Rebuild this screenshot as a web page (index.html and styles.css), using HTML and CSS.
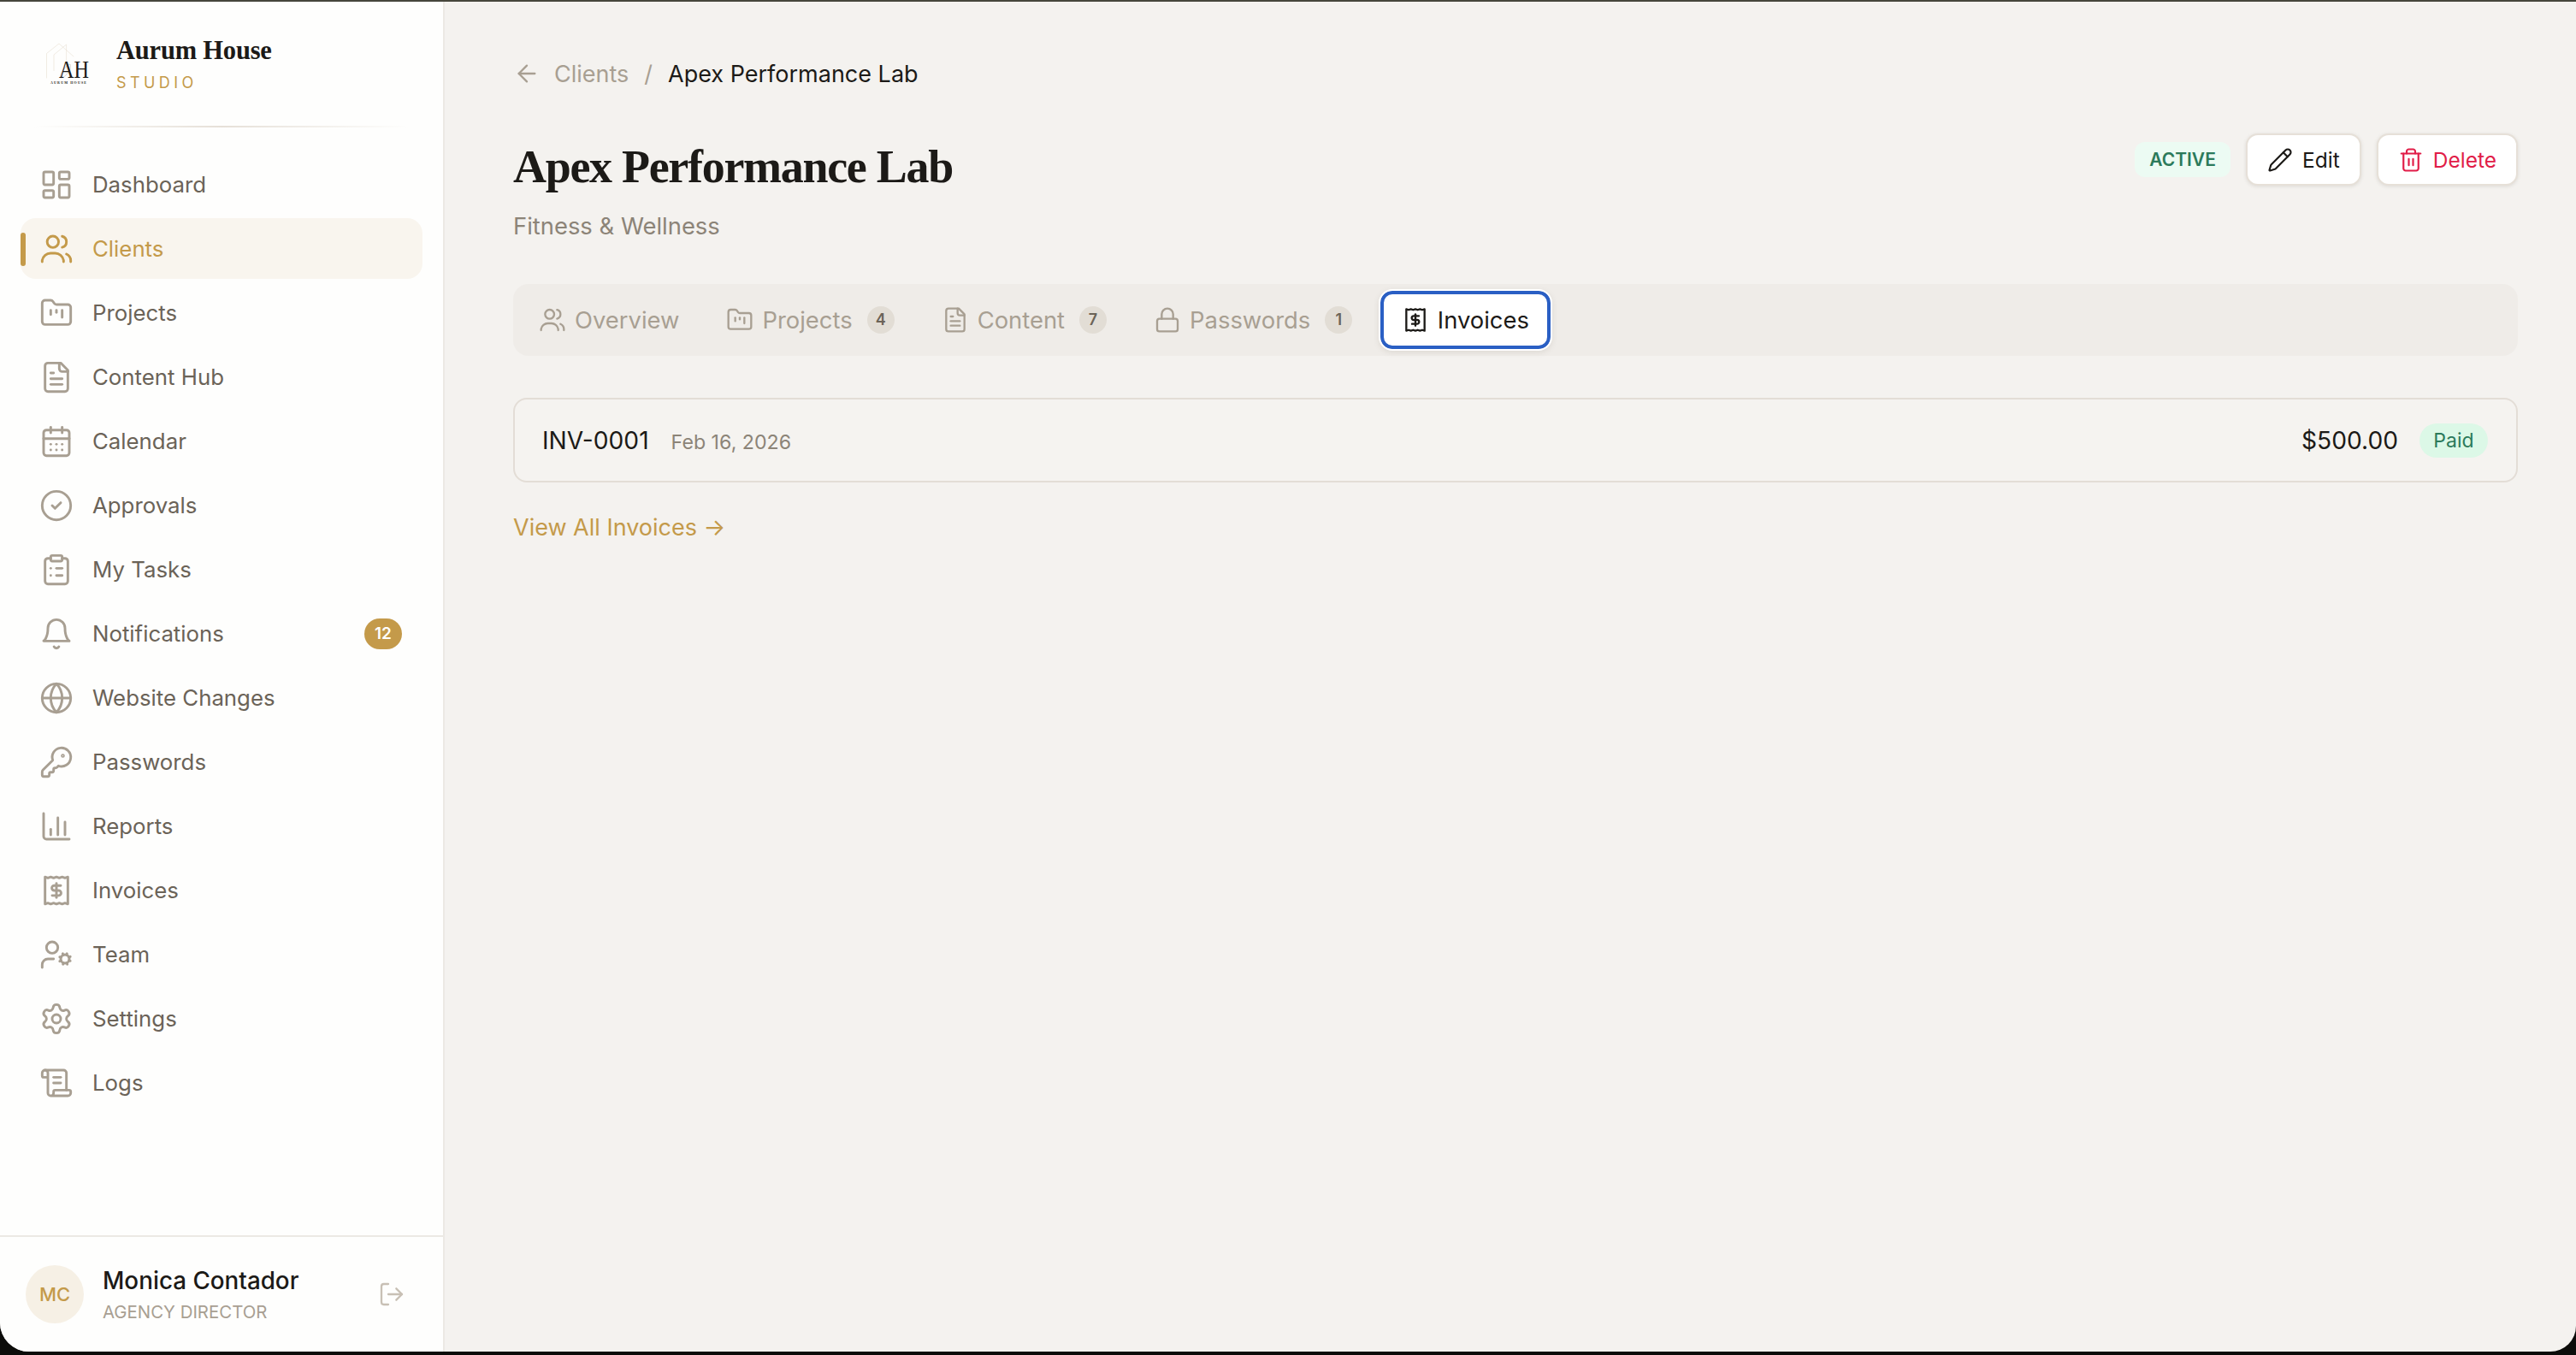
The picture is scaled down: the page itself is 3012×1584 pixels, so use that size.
FILE: index.html
```html
<!DOCTYPE html>
<html lang="en">
<head>
<meta charset="utf-8">
<title>Apex Performance Lab</title>
<link rel="stylesheet" href="styles.css">
</head>
<body>
<svg class="sprite" aria-hidden="true">
  <symbol id="i-dash" viewBox="0 0 24 24"><rect x="3" y="3" width="7" height="9" rx="1"/><rect x="14" y="3" width="7" height="5" rx="1"/><rect x="14" y="12" width="7" height="9" rx="1"/><rect x="3" y="16" width="7" height="5" rx="1"/></symbol>
  <symbol id="i-users" viewBox="0 0 24 24"><circle cx="9.5" cy="7" r="4"/><path d="M2 21v-1a6 6 0 0 1 6-5h3a6 6 0 0 1 6 5v1"/><path d="M16 3.13a4 4 0 0 1 0 7.75"/><path d="M22 21v-1a5 5 0 0 0-3-4.4"/></symbol>
  <symbol id="i-folder" viewBox="0 0 24 24"><path d="M4 20h16a2 2 0 0 0 2-2V8a2 2 0 0 0-2-2h-7.93a2 2 0 0 1-1.66-.9l-.82-1.2A2 2 0 0 0 7.93 3H4a2 2 0 0 0-2 2v13c0 1.1.9 2 2 2Z"/><path d="M8 10v3"/><path d="M12 10v1.5"/><path d="M16 10v5"/></symbol>
  <symbol id="i-file" viewBox="0 0 24 24"><path d="M15 2H6a2 2 0 0 0-2 2v16a2 2 0 0 0 2 2h12a2 2 0 0 0 2-2V7Z"/><path d="M14 2v4a2 2 0 0 0 2 2h4"/><path d="M10 9H8"/><path d="M16 13H8"/><path d="M16 17H8"/></symbol>
  <symbol id="i-cal" viewBox="0 0 24 24"><path d="M8 2v4"/><path d="M16 2v4"/><rect x="3" y="4" width="18" height="18" rx="2"/><path d="M3 10h18"/><path d="M8 14h.01"/><path d="M12 14h.01"/><path d="M16 14h.01"/><path d="M8 18h.01"/><path d="M12 18h.01"/><path d="M16 18h.01"/></symbol>
  <symbol id="i-check" viewBox="0 0 24 24"><circle cx="12" cy="12" r="10"/><path d="m9 12 2 2 4-4"/></symbol>
  <symbol id="i-clip" viewBox="0 0 24 24"><rect x="8" y="2" width="8" height="4" rx="1"/><path d="M16 4h2a2 2 0 0 1 2 2v14a2 2 0 0 1-2 2H6a2 2 0 0 1-2-2V6a2 2 0 0 1 2-2h2"/><path d="M12 11h4"/><path d="M12 16h4"/><path d="M8 11h.01"/><path d="M8 16h.01"/></symbol>
  <symbol id="i-bell" viewBox="0 0 24 24"><path d="M6 8a6 6 0 0 1 12 0c0 7 3 9 3 9H3s3-2 3-9"/><path d="M10.3 21a1.94 1.94 0 0 0 3.4 0"/></symbol>
  <symbol id="i-globe" viewBox="0 0 24 24"><circle cx="12" cy="12" r="10"/><path d="M12 2a14.5 14.5 0 0 0 0 20 14.5 14.5 0 0 0 0-20"/><path d="M2 12h20"/></symbol>
  <symbol id="i-key" viewBox="0 0 24 24"><path d="M2.586 17.414A2 2 0 0 0 2 18.828V21a1 1 0 0 0 1 1h3a1 1 0 0 0 1-1v-1a1 1 0 0 1 1-1h1a1 1 0 0 0 1-1v-1a1 1 0 0 1 1-1h.172a2 2 0 0 0 1.414-.586l.814-.814a6.5 6.5 0 1 0-4-4z"/><circle cx="16.5" cy="7.5" r=".5"/></symbol>
  <symbol id="i-chart" viewBox="0 0 24 24"><path d="M3 3v16a2 2 0 0 0 2 2h16"/><path d="M8 18v-4"/><path d="M13 18V6"/><path d="M18 18V9"/></symbol>
  <symbol id="i-receipt" viewBox="0 0 24 24"><path d="M4 2.5l2 .7 2-.7 2 .7 2-.7 2 .7 2-.7 2 .7 2-.7v19l-2-.7-2 .7-2-.7-2 .7-2-.7-2 .7-2-.7-2 .7z"/><path d="M15 8.5h-4.5a1.75 1.75 0 0 0 0 3.5h3a1.75 1.75 0 0 1 0 3.5H9"/><path d="M12 7v10"/></symbol>
  <symbol id="i-team" viewBox="0 0 24 24"><path d="M10 15H6a4 4 0 0 0-4 4v2"/><circle cx="9" cy="7" r="4"/><circle cx="18" cy="15" r="3"/><path d="m21.7 16.4-.9-.3"/><path d="m15.2 13.9-.9-.3"/><path d="m16.6 18.7.3-.9"/><path d="m19.1 12.2.3-.9"/><path d="m19.6 18.7-.4-1"/><path d="m16.8 12.3-.4-1"/><path d="m14.3 16.6 1-.4"/><path d="m20.7 13.8 1-.4"/></symbol>
  <symbol id="i-gear" viewBox="0 0 24 24"><path d="M9.671 4.136a2.34 2.34 0 0 1 4.659 0 2.34 2.34 0 0 0 3.319 1.915 2.34 2.34 0 0 1 2.33 4.033 2.34 2.34 0 0 0 0 3.831 2.34 2.34 0 0 1-2.33 4.033 2.34 2.34 0 0 0-3.319 1.915 2.34 2.34 0 0 1-4.659 0 2.34 2.34 0 0 0-3.32-1.915 2.34 2.34 0 0 1-2.33-4.033 2.34 2.34 0 0 0 0-3.831A2.34 2.34 0 0 1 6.35 6.051a2.34 2.34 0 0 0 3.319-1.915"/><circle cx="12" cy="12" r="3"/></symbol>
  <symbol id="i-scroll" viewBox="0 0 24 24"><path d="M15 12h-5"/><path d="M15 8h-5"/><path d="M19 17V5a2 2 0 0 0-2-2H4"/><path d="M8 21h12a2 2 0 0 0 2-2v-1a1 1 0 0 0-1-1H11a1 1 0 0 0-1 1v1a2 2 0 1 1-4 0V5a2 2 0 1 0-4 0v2a1 1 0 0 0 1 1h3"/></symbol>
  <symbol id="i-logout" viewBox="0 0 24 24"><path d="M9 21H5a2 2 0 0 1-2-2V5a2 2 0 0 1 2-2h4"/><path d="m16 17 5-5-5-5"/><path d="M21 12H9"/></symbol>
  <symbol id="i-pencil" viewBox="0 0 24 24"><path d="M21.174 6.812a1 1 0 0 0-3.986-3.987L3.842 16.174a2 2 0 0 0-.5.83l-1.321 4.352a.5.5 0 0 0 .623.622l4.353-1.32a2 2 0 0 0 .83-.497z"/><path d="m15 5 4 4"/></symbol>
  <symbol id="i-trash" viewBox="0 0 24 24"><path d="M3 6h18"/><path d="M19 6v14c0 1-1 2-2 2H7c-1 0-2-1-2-2V6"/><path d="M8 6V4c0-1 1-2 2-2h4c1 0 2 1 2 2v2"/><path d="M10 11v6"/><path d="M14 11v6"/></symbol>
  <symbol id="i-lock" viewBox="0 0 24 24"><rect x="3" y="11" width="18" height="11" rx="2"/><path d="M7 11V7a5 5 0 0 1 10 0v4"/></symbol>
  <symbol id="i-back" viewBox="0 0 24 24"><path d="m12 19-7-7 7-7"/><path d="M19 12H5"/></symbol>
</svg>

<div class="window">
  <aside class="sidebar">
    <div class="brand">
      <svg class="brand-logo" viewBox="0 0 60 60" aria-hidden="true">
        <path class="logo-house" d="M4.5 46V17.5L19 6l17 15"/>
        <path class="logo-house" d="M13 37.5V19L27.6 7v30.5"/>
        <path class="logo-swirl" d="M21 46c-3-5 8-16 11-16 2 4-2 10-5 13-2 2-5 3-6 3"/>
        <text class="logo-ah" x="19" y="45.5" textLength="35" lengthAdjust="spacingAndGlyphs">AH</text>
        <text class="logo-sub" x="9" y="53" textLength="42" lengthAdjust="spacing">AURUM HOUSE</text>
      </svg>
      <div class="brand-text">
        <div class="brand-name">Aurum House</div>
        <div class="brand-tag">STUDIO</div>
      </div>
    </div>
    <div class="brand-rule"></div>
    <nav class="nav">
      <a class="nav-item"><svg class="nav-icon"><use href="#i-dash"/></svg><span>Dashboard</span></a>
      <a class="nav-item is-active"><svg class="nav-icon"><use href="#i-users"/></svg><span>Clients</span></a>
      <a class="nav-item"><svg class="nav-icon"><use href="#i-folder"/></svg><span>Projects</span></a>
      <a class="nav-item"><svg class="nav-icon"><use href="#i-file"/></svg><span>Content Hub</span></a>
      <a class="nav-item"><svg class="nav-icon"><use href="#i-cal"/></svg><span>Calendar</span></a>
      <a class="nav-item"><svg class="nav-icon"><use href="#i-check"/></svg><span>Approvals</span></a>
      <a class="nav-item"><svg class="nav-icon"><use href="#i-clip"/></svg><span>My Tasks</span></a>
      <a class="nav-item"><svg class="nav-icon"><use href="#i-bell"/></svg><span>Notifications</span><b class="nav-badge">12</b></a>
      <a class="nav-item"><svg class="nav-icon"><use href="#i-globe"/></svg><span>Website Changes</span></a>
      <a class="nav-item"><svg class="nav-icon"><use href="#i-key"/></svg><span>Passwords</span></a>
      <a class="nav-item"><svg class="nav-icon"><use href="#i-chart"/></svg><span>Reports</span></a>
      <a class="nav-item"><svg class="nav-icon"><use href="#i-receipt"/></svg><span>Invoices</span></a>
      <a class="nav-item"><svg class="nav-icon"><use href="#i-team"/></svg><span>Team</span></a>
      <a class="nav-item"><svg class="nav-icon"><use href="#i-gear"/></svg><span>Settings</span></a>
      <a class="nav-item"><svg class="nav-icon"><use href="#i-scroll"/></svg><span>Logs</span></a>
    </nav>
    <div class="user">
      <div class="avatar">MC</div>
      <div class="user-text">
        <div class="user-name">Monica Contador</div>
        <div class="user-role">AGENCY DIRECTOR</div>
      </div>
      <svg class="user-logout"><use href="#i-logout"/></svg>
    </div>
  </aside>

  <main class="main">
    <div class="crumbs">
      <svg class="crumb-back"><use href="#i-back"/></svg>
      <span class="crumb-link">Clients</span>
      <span class="crumb-sep">/</span>
      <span class="crumb-current">Apex Performance Lab</span>
    </div>

    <header class="head">
      <div>
        <h1 class="title">Apex Performance Lab</h1>
        <div class="subtitle">Fitness &amp; Wellness</div>
      </div>
      <div class="actions">
        <span class="status">ACTIVE</span>
        <button class="btn"><svg class="btn-icon"><use href="#i-pencil"/></svg>Edit</button>
        <button class="btn btn-danger"><svg class="btn-icon"><use href="#i-trash"/></svg>Delete</button>
      </div>
    </header>

    <div class="tabs">
      <div class="tab"><svg class="tab-icon"><use href="#i-users"/></svg>Overview</div>
      <div class="tab"><svg class="tab-icon"><use href="#i-folder"/></svg>Projects<span class="tab-count">4</span></div>
      <div class="tab"><svg class="tab-icon"><use href="#i-file"/></svg>Content<span class="tab-count">7</span></div>
      <div class="tab"><svg class="tab-icon"><use href="#i-lock"/></svg>Passwords<span class="tab-count">1</span></div>
      <div class="tab is-active"><svg class="tab-icon"><use href="#i-receipt"/></svg>Invoices</div>
    </div>

    <div class="invoice">
      <span class="inv-id">INV-0001</span>
      <span class="inv-date">Feb 16, 2026</span>
      <span class="inv-amount">$500.00</span>
      <span class="inv-paid">Paid</span>
    </div>

    <a class="view-all">View All Invoices →</a>
  </main>
</div>
</body>
</html>
```
FILE: styles.css
```css
* { box-sizing: border-box; }
html, body { margin: 0; height: 100%; background: #0c0c0a; }
body { font-family: "Inter", "Noto Sans", sans-serif; overflow: hidden; }
.sprite { display: none; }
svg { fill: none; stroke: currentColor; stroke-linecap: round; stroke-linejoin: round; }

.window {
  display: flex;
  height: 1580px;
  border-top: 2px solid #46463c;
  border-radius: 0 0 30px 34px;
  overflow: hidden;
  background: #f4f2ef;
}

/* Sidebar */
.sidebar {
  width: 520px;
  flex: none;
  display: flex;
  flex-direction: column;
  background: #fefefd;
  border-right: 2px solid #ece9e4;
}
.brand { display: flex; align-items: center; height: 145px; padding-left: 50px; gap: 26px; }
.brand-logo { width: 60px; height: 60px; flex: none; stroke-width: .6; overflow: visible; }
.logo-house { stroke: #e8dfd2; }
.logo-swirl { stroke: #a89f92; stroke-width: .4; }
.logo-ah { font-family: "Liberation Serif", serif; font-size: 30px; fill: #1c1a17; stroke: none; }
.logo-sub { font-family: "Liberation Serif", serif; font-weight: 700; font-size: 4px; fill: #1c1a17; stroke: none; }
.brand-name { font-family: "Liberation Serif", serif; font-weight: 700; font-size: 30.5px; line-height: 36px; color: #1c1a17; letter-spacing: -.2px; }
.brand-tag { font-size: 18px; line-height: 24px; margin-top: 8px; letter-spacing: 4.4px; color: #c49a4a; }
.brand-rule { height: 2px; margin: 0 40px; background: linear-gradient(90deg, transparent, #e6e0d8 50%, transparent); }

.nav { flex: 1; display: flex; flex-direction: column; gap: 4px; padding: 31px 24px 0; }
.nav-item {
  position: relative;
  display: flex;
  align-items: center;
  gap: 22px;
  height: 71px;
  padding: 0 24px 0 22px;
  border-radius: 18px;
  font-size: 25.8px;
  color: #6b6358;
}
.nav-icon { width: 40px; height: 40px; flex: none; color: #a89f92; stroke-width: 1.75; }
.nav-item.is-active { background: #f9f5ee; color: #c49a4a; }
.is-active .nav-icon { color: #c49a4a; }
.nav-item.is-active::before {
  content: "";
  position: absolute;
  left: 0; top: 17px;
  width: 6px; height: 39px;
  border-radius: 3px;
  background: #c49a4a;
}
.nav-badge {
  margin-left: auto;
  width: 44px; height: 36px;
  border-radius: 18px;
  background: #c49a4a;
  color: #fff;
  font-size: 19px;
  font-weight: 600;
  line-height: 36px;
  text-align: center;
}

.user {
  display: flex;
  align-items: center;
  height: 136px;
  padding: 0 44px 0 30px;
  border-top: 2px solid #ece9e4;
}
.avatar {
  width: 68px; height: 68px;
  flex: none;
  border-radius: 50%;
  background: #f6f0e5;
  color: #c49a4a;
  font-size: 22px;
  font-weight: 500;
  line-height: 68px;
  text-align: center;
}
.user-text { margin-left: 22px; flex: 1; }
.user-name { font-size: 27.8px; line-height: 36px; color: #1c1a17; font-weight: 500; }
.user-role { font-size: 20.4px; line-height: 26px; margin-top: 6px; color: #a89f92; }
.user-logout { width: 32px; height: 32px; color: #c8c0b5; stroke-width: 1.75; }

/* Main */
.main { flex: 1; min-width: 0; padding: 64px 68px 0 80px; }
.crumbs { display: flex; align-items: center; height: 40px; font-size: 27px; color: #a89f92; }
.crumb-back { width: 32px; height: 32px; margin-right: 16px; stroke-width: 1.75; }
.crumb-sep { margin: 0 18px; }
.crumb-current { color: #1c1a17; }

.head { display: flex; justify-content: space-between; align-items: flex-start; margin-top: 45px; }
.title { margin: 11px 0 0; font-family: "Liberation Serif", serif; font-weight: 700; font-size: 54px; line-height: 66px; color: #1c1a17; letter-spacing: -1.3px; }
.subtitle { margin-top: 18px; font-size: 27.4px; line-height: 36px; color: #8c8478; }
.actions { display: flex; align-items: center; gap: 18px; margin-top: 5px; }
.status {
  width: 112px; height: 41px;
  border-radius: 12px;
  background: #ecfbf3;
  color: #2c7a5b;
  font-size: 21px;
  font-weight: 600;
  line-height: 41px;
  text-align: center;
}
.btn {
  display: flex;
  align-items: center;
  justify-content: center;
  gap: 11px;
  height: 61px;
  padding: 0 23px;
  border: 2px solid #e6e0d8;
  border-radius: 14px;
  background: #fff;
  box-shadow: 0 1px 4px rgba(60,50,30,.12);
  color: #1c1a17;
  font: inherit;
  font-size: 24.5px;
}
.btn-danger { color: #e11d48; }
.btn-icon { width: 30px; height: 30px; stroke-width: 1.75; }

.tabs {
  display: flex;
  align-items: center;
  gap: 4px;
  height: 84px;
  margin-top: 50px;
  padding: 0 4px;
  border-radius: 18px;
  background: #efece8;
}
.tab {
  display: flex;
  align-items: center;
  height: 68px;
  padding: 0 25.5px;
  font-size: 27.4px;
  color: #a89f92;
  border-radius: 14px;
}
.tab:first-child { padding-left: 26px; }
.tab-icon { width: 32px; height: 32px; margin-right: 10px; stroke-width: 1.75; }
.tab-count {
  width: 32px; height: 32px;
  margin-left: 17px;
  border-radius: 50%;
  background: #e2ddd5;
  color: #6b6358;
  font-size: 18px;
  font-weight: 600;
  line-height: 32px;
  text-align: center;
}
.tab.is-active {
  margin-left: 3px;
  padding: 0 21px;
  background: #fff;
  color: #1c1a17;
  border: 4px solid #2a5fc4;
  outline: 2px solid #fff;
  box-shadow: 0 2px 8px rgba(60,50,30,.15);
}

.invoice {
  display: flex;
  align-items: center;
  height: 99px;
  margin-top: 49px;
  padding: 0 33px 0 32px;
  border: 2px solid #e3ddd6;
  border-radius: 16px;
  background: #f5f3f0;
}
.inv-id { font-size: 28.2px; color: #1c1a17; }
.inv-date { margin: 4px 0 0 26px; font-size: 23.2px; color: #8c8478; }
.inv-amount { margin-left: auto; font-size: 28.2px; color: #1c1a17; }
.inv-paid {
  width: 80px; height: 40px;
  margin-left: 25px;
  border-radius: 20px;
  background: #dcf8e7;
  color: #2c7a5b;
  font-size: 23px;
  line-height: 40px;
  text-align: center;
}
.view-all { display: block; margin-top: 35px; font-size: 27px; line-height: 36px; color: #c49a4a; }
```
